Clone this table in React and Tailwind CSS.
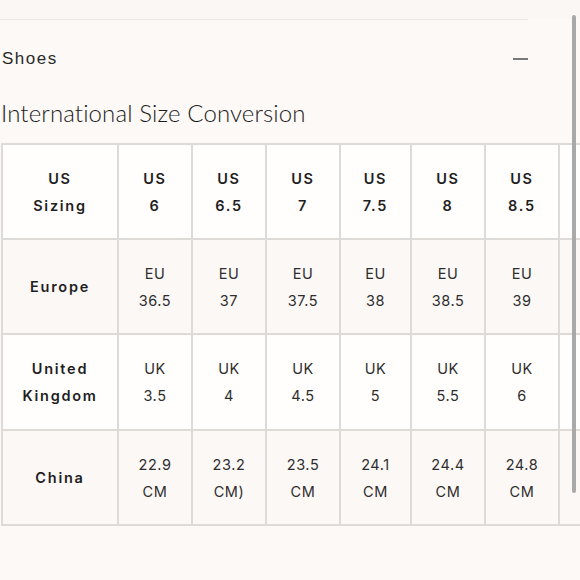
import React from "react";

const cols = [
  { us: "6", eu: "36.5", uk: "3.5", cn: "22.9", cnu: "CM" },
  { us: "6.5", eu: "37", uk: "4", cn: "23.2", cnu: "CM)" },
  { us: "7", eu: "37.5", uk: "4.5", cn: "23.5", cnu: "CM" },
  { us: "7.5", eu: "38", uk: "5", cn: "24.1", cnu: "CM" },
  { us: "8", eu: "38.5", uk: "5.5", cn: "24.4", cnu: "CM" },
  { us: "8.5", eu: "39", uk: "6", cn: "24.8", cnu: "CM" },
];

const widths = ["w-[72px]", "w-[72px]", "w-[72px]", "w-[69px]", "w-[72px]", "w-[72px]", "w-[72px]"];

function Cell({ w, bg, bold, lines }) {
  return (
    <div
      className={`${w} ${bg} h-full shrink-0 flex flex-col items-center justify-center text-center leading-[27px] ${
        bold
          ? "font-semibold tracking-[0.12em] text-[14.5px] text-[#1f1f1f]"
          : "font-normal tracking-[0.04em] text-[14.5px] text-[#2e2e2e]"
      }`}
    >
      {lines.map((l, i) => (
        <span key={i}>{l}</span>
      ))}
    </div>
  );
}

function Row({ bg, h, label, values, boldValues }) {
  return (
    <div className={`flex gap-[2px] ${h}`}>
      <Cell w="w-[114px]" bg={bg} bold lines={label} />
      {values.map((v, i) => (
        <Cell key={i} w={widths[i]} bg={bg} bold={boldValues} lines={v} />
      ))}
      <Cell w={widths[6]} bg={bg} lines={[]} />
    </div>
  );
}

export default function App() {
  const white = "bg-[#fffefd]";
  const tint = "bg-[#fcf8f6]";
  return (
    <div
      className="relative w-[580px] h-[580px] overflow-hidden bg-[#fcf9f7]"
      style={{ fontFamily: "Inter, 'Liberation Sans', sans-serif" }}
    >
      <div className="h-[19px] bg-[#fbf7f5]" />
      <div className="w-[528px] h-[1px] bg-[#ebe7e4]" />
      <div className="w-[528px] h-[78px] flex items-center justify-between pl-[2px]">
        <span
          className="text-[17px] tracking-[0.09em] text-[#2a2a2a]"
          style={{ fontFamily: "'Liberation Sans', sans-serif" }}
        >
          Shoes
        </span>
        <span className="block w-[15px] h-[2px] bg-[#7a7a7a] mb-[1px]" />
      </div>
      <div className="h-[45px] pl-[1px]">
        <h2
          className="text-[24px] leading-[30px] font-light text-[#1c1c1c] tracking-[0.005em]"
          style={{ fontFamily: "Lato, 'Liberation Sans', sans-serif" }}
        >
          International Size Conversion
        </h2>
      </div>
      <div className="ml-[1px] w-[700px] bg-[#dddad7] p-[2px] flex flex-col gap-[2px]">
        <Row
          bg={white}
          h="h-[93px]"
          label={["US", "Sizing"]}
          values={cols.map((c) => ["US", c.us])}
          boldValues
        />
        <Row bg={tint} h="h-[93px]" label={["Europe"]} values={cols.map((c) => ["EU", c.eu])} />
        <Row
          bg={white}
          h="h-[94px]"
          label={["United", "Kingdom"]}
          values={cols.map((c) => ["UK", c.uk])}
        />
        <Row bg={tint} h="h-[93px]" label={["China"]} values={cols.map((c) => [c.cn, c.cnu])} />
      </div>
      <div className="absolute left-[572px] top-[15px] w-[4px] h-[478px] rounded-full bg-[#a9a9a9]" />
    </div>
  );
}
